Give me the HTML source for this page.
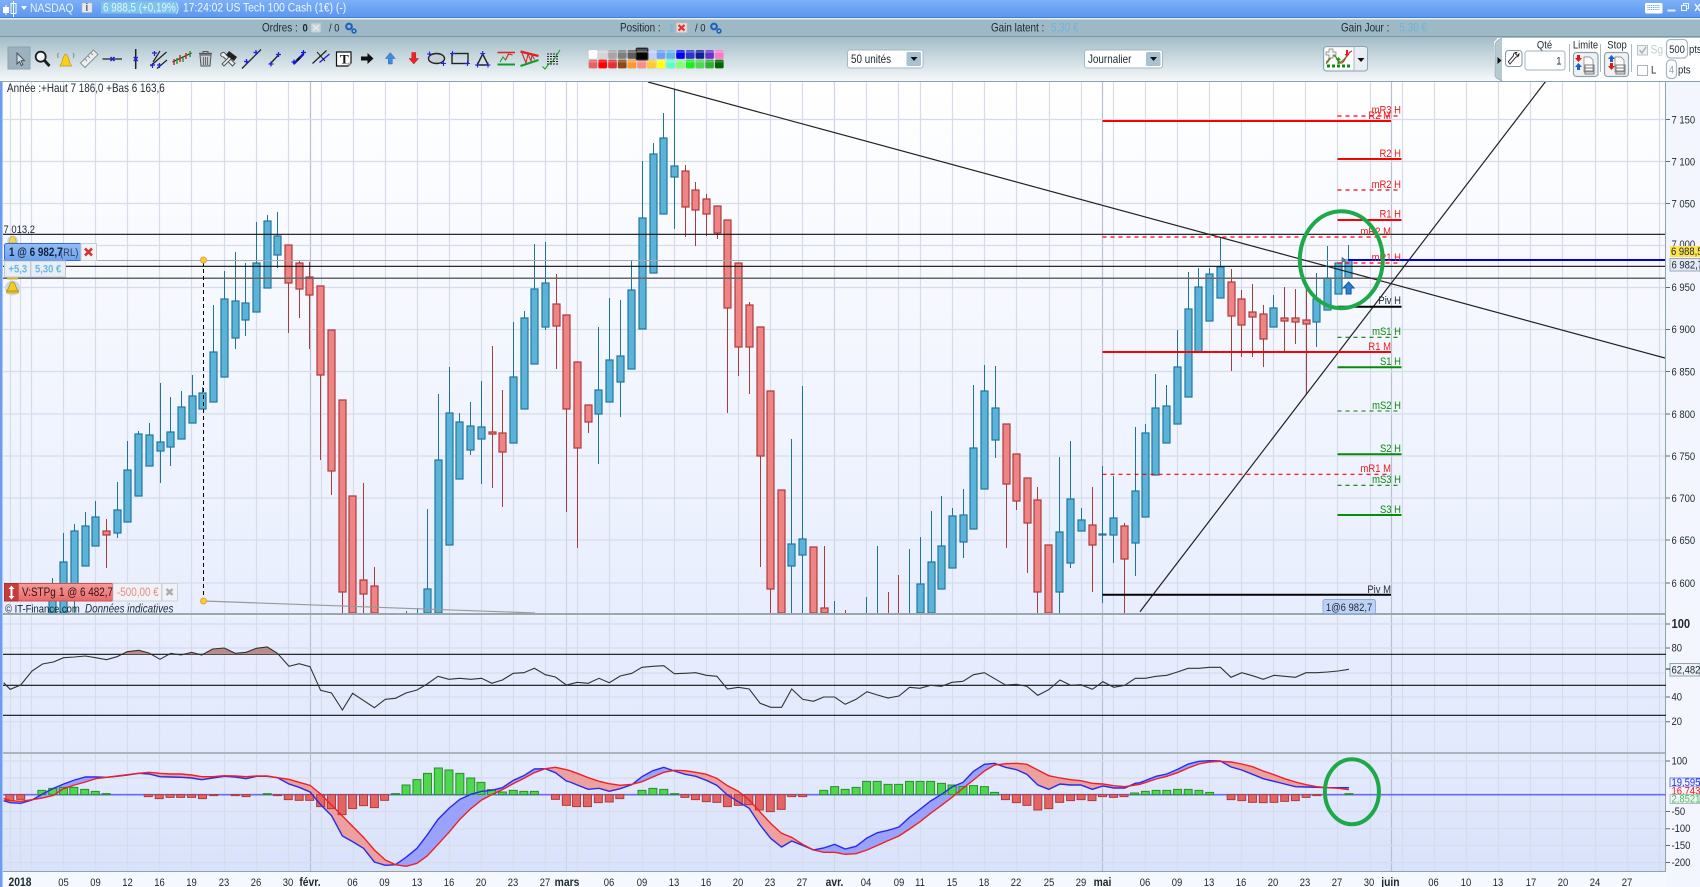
<!DOCTYPE html>
<html lang="fr"><head><meta charset="utf-8"><title>NASDAQ</title>
<style>
html,body{margin:0;padding:0;background:#fff;width:1700px;height:887px;overflow:hidden}
svg{display:block}
text{font-family:"Liberation Sans",sans-serif;font-size:11px;fill:#1d2830;transform-box:fill-box;transform-origin:0 0;transform:scaleX(.86)}
text.m{text-anchor:middle;transform-origin:50% 0}
text.e{text-anchor:end;transform-origin:100% 0}
.b{font-weight:bold}
.rd{fill:#f01818}.gn{fill:#0a8a0a}
.ns{vector-effect:non-scaling-stroke}
</style></head><body>
<svg width="1700" height="887" viewBox="0 0 1700 887" xmlns="http://www.w3.org/2000/svg">
<defs>
<linearGradient id="gt" x1="0" y1="0" x2="0" y2="1"><stop offset="0" stop-color="#7db0f7"/><stop offset="1" stop-color="#5a96ee"/></linearGradient>
<linearGradient id="gb" x1="0" y1="0" x2="0" y2="1"><stop offset="0" stop-color="#a3bcc8"/><stop offset=".55" stop-color="#d0dee3"/><stop offset="1" stop-color="#f6f8fa"/></linearGradient>
<linearGradient id="gm" x1="0" y1="0" x2="0" y2="1"><stop offset="0" stop-color="#ffffff"/><stop offset="1" stop-color="#e8eefe"/></linearGradient>
<linearGradient id="gr" x1="0" y1="0" x2="0" y2="1"><stop offset="0" stop-color="#e8eefe"/><stop offset="1" stop-color="#e2e9fd"/></linearGradient>
<linearGradient id="gc" x1="0" y1="0" x2="0" y2="1"><stop offset="0" stop-color="#e5ebfd"/><stop offset="1" stop-color="#d9e2fb"/></linearGradient>
<linearGradient id="gs" x1="0" y1="0" x2="0" y2="1"><stop offset="0" stop-color="#f59a9a"/><stop offset="1" stop-color="#e86a6a"/></linearGradient>
<linearGradient id="gp" x1="0" y1="0" x2="0" y2="1"><stop offset="0" stop-color="#94bdf5"/><stop offset="1" stop-color="#6ea2ec"/></linearGradient>
<linearGradient id="ga" gradientUnits="userSpaceOnUse" x1="0" y1="0" x2="1568" y2="0">
<stop offset=".064" stop-color="#eda0a0"/><stop offset=".064" stop-color="#9aa2fb"/><stop offset=".2455" stop-color="#9aa2fb"/><stop offset=".2455" stop-color="#eda0a0"/><stop offset=".694" stop-color="#eda0a0"/><stop offset=".694" stop-color="#9aa2fb"/><stop offset=".9566" stop-color="#9aa2fb"/><stop offset=".9566" stop-color="#eda0a0"/></linearGradient>
<linearGradient id="gd" gradientUnits="userSpaceOnUse" x1="0" y1="0" x2="1568" y2="0">
<stop offset=".108" stop-color="#eda0a0"/><stop offset=".108" stop-color="#9aa2fb"/><stop offset=".183" stop-color="#9aa2fb"/><stop offset=".183" stop-color="#eda0a0"/><stop offset=".427" stop-color="#eda0a0"/><stop offset=".427" stop-color="#9aa2fb"/><stop offset=".746" stop-color="#9aa2fb"/><stop offset=".746" stop-color="#eda0a0"/><stop offset=".979" stop-color="#eda0a0"/><stop offset=".979" stop-color="#9aa2fb"/></linearGradient>
<linearGradient id="ge" gradientUnits="userSpaceOnUse" x1="0" y1="0" x2="1568" y2="0">
<stop offset=".1435" stop-color="#9aa2fb"/><stop offset=".1435" stop-color="#eda0a0"/><stop offset=".335" stop-color="#eda0a0"/><stop offset=".335" stop-color="#9aa2fb"/></linearGradient>
<clipPath id="cm"><rect x="3" y="82" width="1663" height="531.5"/></clipPath>
<clipPath id="co"><rect x="3" y="617" width="1663" height="37.3"/></clipPath>
</defs>

<!-- page backgrounds -->
<rect width="1700" height="887" fill="#f3f6ff"/>
<rect x="3" y="82" width="1663" height="532" fill="url(#gm)"/>
<rect x="3" y="614" width="1663" height="3" fill="#eef2fa"/>
<rect x="3" y="617" width="1663" height="135" fill="url(#gr)"/>
<rect x="3" y="754" width="1663" height="117" fill="url(#gc)"/>
<rect x="3" y="872" width="1663" height="15" fill="#f6f8ff"/>

<!-- grid -->
<path fill="none" stroke="#d6dcea" stroke-width="1.2" d="M10.5 82V871M20.5 82V871M31.5 82V871M63.5 82V871M95.5 82V871M127.5 82V871M159.5 82V871M191.5 82V871M224.5 82V871M256.5 82V871M288.5 82V871M321.5 82V871M353.5 82V871M385.5 82V871M417.5 82V871M449.5 82V871M481.5 82V871M513.5 82V871M545.5 82V871M577.5 82V871M609.5 82V871M642.5 82V871M674.5 82V871M706.5 82V871M738.5 82V871M770.5 82V871M802.5 82V871M866.5 82V871M898.5 82V871M920.5 82V871M952.5 82V871M984.5 82V871M1016.5 82V871M1049.5 82V871M1081.5 82V871M1113.5 82V871M1145.5 82V871M1177.5 82V871M1209.5 82V871M1241.5 82V871M1273.5 82V871M1305.5 82V871M1337.5 82V871M1370.5 82V871M1402.5 82V871M1434.5 82V871M1466.5 82V871M1498.5 82V871M1530.5 82V871M1562.5 82V871M1595.5 82V871M1627.5 82V871M1659.5 82V871"/>
<path fill="none" stroke="#cdd4e4" stroke-width="1.2" d="M566.5 82V871M834.5 82V871"/>
<path fill="none" stroke="#b8c0cf" stroke-width="1.2" d="M310.5 82V871M1102.5 82V871M1391.5 82V871"/>
<path fill="none" stroke="#d6dcea" stroke-width="1.2" d="M3 119.5H1666M3 161.5H1666M3 203.5H1666M3 245.5H1666M3 287.5H1666M3 329.5H1666M3 371.5H1666M3 414H1666M3 456H1666M3 498H1666M3 540H1666M3 583H1666M3 624H1666M3 648H1666M3 673H1666M3 697H1666M3 721.7H1666M3 761H1666M3 778H1666M3 811.5H1666M3 828.7H1666M3 845.5H1666M3 862.5H1666"/>

<!-- candles -->
<g clip-path="url(#cm)" fill="none">
<path stroke="#1f7394" d="M52.5 578V613M63.5 533V613M74.5 524V613M85.5 512V566M95.5 501V546M117.5 482V538M127.5 441V522M138.5 431V496M149.5 423V466M160.5 383V483M170.5 397V466M181.5 391V439M192.5 375V423M202.5 387V409M213.5 305V402M224.5 271V377M235.5 252V349M245.5 263V336M256.5 222V312M267.5 215V288M277.5 212V268M406.5 611V613M417.5 608V613M427.5 509V613M438.5 394V613M449.5 367V545M459.5 413V479M470.5 402V455M481.5 381V484M513.5 322V443M524.5 311V409M534.5 244V364M545.5 242V330M598.5 327V464M609.5 298V402M620.5 300V417M631.5 261V369M642.5 161V329M653.5 143V273M663.5 113V214M674.5 89V229M791.5 439V613M802.5 386V613M834.5 601V613M866.5 597V613M877.5 546V613M909.5 549V613M920.5 537V613M931.5 511V613M941.5 496V589M952.5 508V568M963.5 489V558M973.5 385V529M984.5 365V489M995.5 366V458M1059.5 457V613M1070.5 441V568M1081.5 508V531M1102.5 466V603M1113.5 476V563M1135.5 427V576M1145.5 424V517M1155.5 374V475M1166.5 385V443M1177.5 330V424M1188.5 272V397M1198.5 268V352M1209.5 268V321M1220.5 237V298M1273.5 295V327M1316.5 273V347M1327.5 246V310M1338.5 263V294M1348.5 245V278"/>
<path stroke="#a83c3c" d="M106.5 519V568M288.5 245V333M299.5 260V318M309.5 262V349M320.5 286V460M331.5 330V495M342.5 400V613M352.5 496V613M363.5 483V613M374.5 567V613M492.5 346V488M502.5 390V507M556.5 274V369M566.5 315V512M577.5 362V548M588.5 405V433M685.5 165V237M695.5 182V246M706.5 194V236M717.5 206V239M727.5 220V413M738.5 263V376M749.5 302V394M760.5 327V567M770.5 391V613M781.5 490V613M813.5 547V613M824.5 546V613M845.5 610V613M888.5 592V613M898.5 575V613M1006.5 424V548M1016.5 454V510M1027.5 478V573M1037.5 487V613M1048.5 545V613M1092.5 487V592M1124.5 523V613M1231.5 269V371M1241.5 290V357M1252.5 284V357M1263.5 305V367M1284.5 287V352M1295.5 289V344M1306.5 288V395"/>
<path fill="#5cb3da" stroke="#22789f" stroke-width="1.2" d="M49 595h7V613h-7zM60 562h7V613h-7zM71 531h7V590h-7zM82 526h7V566h-7zM92 517h7V546h-7zM114 510h7V533h-7zM124 470h7V522h-7zM135 434h7V496h-7zM146 435h7V466h-7zM157 442h7V451h-7zM167 432h7V447h-7zM178 407h7V439h-7zM189 396h7V423h-7zM199 393h7V409h-7zM210 352h7V402h-7zM221 299h7V377h-7zM232 301h7V338h-7zM242 303h7V320h-7zM253 263h7V312h-7zM264 221h7V288h-7zM274 236h7V255h-7zM424 589h7V613h-7zM435 460h7V613h-7zM446 413h7V545h-7zM456 422h7V479h-7zM467 426h7V450h-7zM478 427h7V439h-7zM510 377h7V443h-7zM521 318h7V409h-7zM531 289h7V364h-7zM542 283h7V327h-7zM595 390h7V414h-7zM606 360h7V402h-7zM617 356h7V382h-7zM628 290h7V369h-7zM639 218h7V329h-7zM650 154h7V273h-7zM660 138h7V214h-7zM671 166h7V177h-7zM788 544h7V566h-7zM799 539h7V555h-7zM917 584h7V613h-7zM928 562h7V613h-7zM938 546h7V589h-7zM949 516h7V568h-7zM960 515h7V542h-7zM970 448h7V529h-7zM981 391h7V489h-7zM992 408h7V440h-7zM1056 532h7V592h-7zM1067 499h7V563h-7zM1078 520h7V531h-7zM1099 534h7V535h-7zM1110 518h7V535h-7zM1132 491h7V543h-7zM1142 433h7V517h-7zM1152 408h7V475h-7zM1163 406h7V443h-7zM1174 367h7V424h-7zM1185 309h7V397h-7zM1195 287h7V352h-7zM1206 274h7V321h-7zM1217 267h7V298h-7zM1270 308h7V327h-7zM1313 299h7V322h-7zM1324 278h7V310h-7zM1335 263h7V294h-7zM1345 260h7V278h-7z"/>
<path fill="#ee8484" stroke="#b03c3c" stroke-width="1.2" d="M103 531h7V535h-7zM285 245h7V283h-7zM296 263h7V289h-7zM306 277h7V295h-7zM317 286h7V375h-7zM328 330h7V471h-7zM339 400h7V592h-7zM349 496h7V613h-7zM360 580h7V594h-7zM371 586h7V613h-7zM489 432h7V434h-7zM499 433h7V452h-7zM553 304h7V326h-7zM563 315h7V409h-7zM574 362h7V448h-7zM585 405h7V422h-7zM682 171h7V207h-7zM692 190h7V210h-7zM703 199h7V214h-7zM714 206h7V233h-7zM724 220h7V308h-7zM735 263h7V347h-7zM746 305h7V347h-7zM757 327h7V456h-7zM767 391h7V589h-7zM778 490h7V613h-7zM810 547h7V613h-7zM821 608h7V613h-7zM1003 424h7V484h-7zM1013 454h7V501h-7zM1024 478h7V523h-7zM1034 500h7V592h-7zM1045 545h7V613h-7zM1089 525h7V545h-7zM1121 526h7V559h-7zM1228 282h7V316h-7zM1238 299h7V325h-7zM1249 312h7V317h-7zM1260 314h7V339h-7zM1281 318h7V321h-7zM1292 318h7V322h-7zM1303 320h7V324h-7z"/>

<!-- horizontal levels -->
<path stroke="#111" stroke-width="1.2" d="M3 234.3H1666M3 266.3H1666"/>
<path stroke="#666" stroke-width="1.5" d="M3 278.3H1666"/>
<path stroke="#a4a8ae" d="M3 260.5H1666"/>
<path stroke="#222" stroke-width="1.2" d="M648 82L1665 358M1140 611.7L1545.4 81.7"/>
<path stroke="#999" stroke-width="1.2" d="M203.5 601L535 613"/>
<path stroke="#f00" stroke-width="2" d="M1102.5 121H1391M1102.5 352H1391M1337.5 159H1401.5M1337.5 220H1401.5"/>
<path stroke="#f00" stroke-width="1.2" stroke-dasharray="4 4" d="M1102.5 237H1391M1102.5 474.3H1391M1337.5 116H1398M1337.5 190H1398M1337.5 263H1398"/>
<path stroke="#0a8a0a" stroke-width="2" d="M1337.5 367.3H1401.5M1337.5 454.3H1401.5M1337.5 515H1401.5"/>
<path stroke="#0a7a0a" stroke-width="1.1" stroke-dasharray="4 4" d="M1337.5 337.3H1398M1337.5 411H1398M1337.5 485.3H1398"/>
<path stroke="#000" stroke-width="2" d="M1102.5 594.7H1391M1337.5 306.7H1401.5"/>
<path stroke="#0000e0" stroke-width="2" d="M1348 260H1666"/>
<path stroke="#000" stroke-dasharray="4 3" d="M203.5 262V600"/>
<g>
<text class="e rd" x="1391" y="119">R2 M</text>
<text class="e rd" x="1401" y="113.500">mR3 H</text>
<text class="e rd" x="1401" y="157">R2 H</text>
<text class="e rd" x="1401" y="188">mR2 H</text>
<text class="e rd" x="1401" y="217.500">R1 H</text>
<text class="e rd" x="1391" y="235">mR2 M</text>
<text class="e rd" x="1401" y="261">mR1 H</text>
<text class="e" x="1401" y="304">Piv H</text>
<text class="e gn" x="1401" y="335">mS1 H</text>
<text class="e rd" x="1391" y="350">R1 M</text>
<text class="e gn" x="1401" y="365">S1 H</text>
<text class="e gn" x="1401" y="409">mS2 H</text>
<text class="e gn" x="1401" y="452">S2 H</text>
<text class="e rd" x="1391" y="472">mR1 M</text>
<text class="e gn" x="1401" y="483">mS3 H</text>
<text class="e gn" x="1401" y="513">S3 H</text>
<text class="e" x="1391" y="593">Piv M</text>
</g>
<path d="M1348.600 282l5.500 6h-3v6h-5v-6h-3z" fill="#2a80d0" stroke="#155a9a"/>
<path d="M1342 257.500v5l3.500-2.500z" fill="#5a7fb0" stroke="#39557a" stroke-width=".6"/>
<ellipse cx="1341.300" cy="259.700" rx="41.500" ry="48.500" fill="none" stroke="#1fa84a" stroke-width="4"/>
</g>

<circle cx="203.500" cy="260" r="3" fill="#f6c945" stroke="#e8a820"/>
<circle cx="203.500" cy="601" r="3" fill="#f6c945" stroke="#e8a820"/>

<!-- panel separators -->
<rect x="3" y="613" width="1663" height="2" fill="#98a9b0"/>
<rect x="3" y="752" width="1663" height="2" fill="#a9b6bc"/>
<rect x="3" y="871" width="1663" height="1" fill="#8fa3ad"/>
<rect x="1665" y="82" width="1" height="790" fill="#8fa3ad"/>

<!-- RSI -->
<path stroke="#111" stroke-width="1.2" d="M3 654.300H1666M3 685.300H1666M3 715.300H1666"/>
<polygon clip-path="url(#co)" fill="#b98c8c" points="117,660 127.200,651.700 138.900,650.300 149,653 160,659.300 170.800,653.300 181,655 191.600,652.300 201.700,655 212.700,649 224.300,648 235.200,653.300 246.100,652.300 256.300,648.300 267.200,647 277.400,653.300 289,666"/>
<polyline fill="none" stroke="#333" stroke-width="1.1" points="3.600,682.700 10.200,689.300 20.700,685 32,671 42.500,664 53.400,662 63.600,657.700 74.500,657 85.400,656 95.600,657.700 106.500,659.700 117,656.700 127.200,651.700 138.900,650.300 149,653 160,659.300 170.800,653.300 181,655 191.600,652.300 201.700,655 212.700,649 224.300,648 235.200,653.300 246.100,652.300 256.300,648.300 267.200,647 277.400,653.300 289,666.300 299.200,663.700 310,666.700 320.600,690.300 331.500,693 342.400,710 352.600,693.300 374.400,707.700 385.300,699.300 395.500,698.300 406,693 417,690 427.100,684 438,676.300 448.900,679.300 459.800,678.300 470.700,679.300 481.600,678.300 491.800,683.300 502.400,680 513.300,673.300 523.800,672.700 534.400,668.300 545.300,674.700 555.400,677 566.300,685 577.300,682.300 588.200,683.300 599,678.300 609.300,682.700 620.200,676 631.800,673.300 642,667.300 652.900,666.300 663.800,665.700 674.300,673.700 685.200,673.300 695.800,672.700 706.300,675.300 716.900,676.300 727.400,689 738.300,687.300 749.200,689 760.100,703.300 770.700,707.300 781.600,707.300 791.700,689 802.600,699.300 813.500,701.300 823.700,697 834.600,697 845.200,704.300 856.100,699.300 867,691.700 877.500,695 888.100,698 899,696 909.500,687.300 920,688.300 930.600,685.300 941.500,686.300 952,682.300 963,681.300 973.500,674.700 984.400,672.700 994.600,678.700 1005.500,685 1016.400,684.300 1026.900,686.300 1037.800,695.300 1048.700,689.700 1060,680 1070.500,685.300 1080.700,684.700 1092.400,689.300 1102.900,681.700 1113.800,687.300 1124.700,685.300 1135.300,678.300 1145.400,678.300 1156,676.300 1166.800,675.300 1177.500,672 1188,668.300 1199,668.300 1209.600,667.300 1220.400,667.300 1231,677.300 1241.800,672.700 1252.500,675.700 1263.200,679.300 1274,675.300 1284.600,676.300 1295.400,677.300 1306,672.700 1316.800,672.700 1327.500,672 1338,671 1349,669.300"/>

<!-- MACD -->
<path stroke="#6a6af0" stroke-width="1.6" d="M3 794.700H1666"/>
<g transform="translate(0,610) scale(.36351,.33333)">
<polygon fill="url(#ga)" points="10,572 28,578 57,580 88,570 117,552 147,535 175,522 205,510 235,501 263,501 293,502 322,499 350,495 382,490 410,492 440,500 470,501 498,502 527,504 555,509 585,504 617,499 647,501 677,506 705,499 735,499 763,503 795,522 823,532 853,546 882,584 912,617 942,678 970,695 1000,715 1030,756 1060,766 1088,764 1117,742 1147,715 1175,675 1205,628 1235,595 1265,568 1295,553 1325,544 1353,541 1382,533 1412,511 1441,497 1470,477 1500,476 1528,488 1558,513 1568,516 1568,482 1558,479 1528,472 1500,476 1470,488 1441,505 1412,521 1382,539 1353,554 1325,570 1295,596 1265,628 1235,667 1205,703 1175,738 1147,760 1117,769 1088,764 1060,750 1030,720 1000,682 970,649 942,618 912,585 882,552 853,526 823,517 795,508 763,503 735,498 705,498 677,500 647,498 617,497 585,500 555,500 527,495 498,492 470,492 440,490 410,487 382,490 350,494 322,498 293,502 263,506 235,516 205,525 175,536 147,556 117,564 88,569 57,574 28,572 10,565"/>
<path class="ns" fill="#4fd84f" stroke="#2a8f2a" d="M104 554V541h22V554zM134 554V535h22V554zM164 554V532h22V554zM192 554V532h22V554zM222 554V538h22V554zM251 554V544h22V554zM281 554V551h22V554zM724 554V551h22V554zM1077 554V551h22V554zM1106 554V525h22V554zM1136 554V509h22V554zM1165 554V490h22V554zM1195 554V474h22V554zM1224 554V480h22V554zM1254 554V490h22V554zM1284 554V504h22V554zM1312 554V517h22V554zM1341 554V539h22V554zM1371 554V546h22V554zM1401 554V541h22V554zM1430 554V544h22V554zM1459 554V544h22V554z"/>
<path class="ns" fill="#e26464" stroke="#b03c3c" d="M16 554V572h22V554zM46 554V568h22V554zM397 554V560h22V554zM427 554V566h22V554zM457 554V562h22V554zM486 554V562h22V554zM516 554V562h22V554zM546 554V566h22V554zM577 554V557h22V554zM636 554V557h22V554zM666 554V560h22V554zM752 554V557h22V554zM782 554V569h22V554zM812 554V571h22V554zM841 554V571h22V554zM871 554V590h22V554zM901 554V596h22V554zM930 554V614h22V554zM959 554V596h22V554zM989 554V587h22V554zM1019 554V593h22V554zM1047 554V571h22V554zM1517 554V568h22V554zM1547 554V586h22V554z"/>
<polyline class="ns" fill="none" stroke="#2a2aee" stroke-width="1.4" points="10,572 28,578 57,580 88,570 117,552 147,535 175,522 205,510 235,501 263,501 293,502 322,499 350,495 382,490 410,492 440,500 470,501 498,502 527,504 555,509 585,504 617,499 647,501 677,506 705,499 735,499 763,503 795,522 823,532 853,546 882,584 912,617 942,678 970,695 1000,715 1030,756 1060,766 1088,764 1117,742 1147,715 1175,675 1205,628 1235,595 1265,568 1295,553 1325,544 1353,541 1382,533 1412,511 1441,497 1470,477 1500,476 1528,488 1558,513 1568,516"/>
<polyline class="ns" fill="none" stroke="#ee2222" stroke-width="1.4" points="10,565 28,572 57,574 88,569 117,564 147,556 175,536 205,525 235,516 263,506 293,502 322,498 350,494 382,490 410,487 440,490 470,492 498,492 527,495 555,500 585,500 617,497 647,498 677,500 705,498 735,498 763,503 795,508 823,517 853,526 882,552 912,585 942,618 970,649 1000,682 1030,720 1060,750 1088,764 1117,769 1147,760 1175,738 1205,703 1235,667 1265,628 1295,596 1325,570 1353,554 1382,539 1412,521 1441,505 1470,488 1500,476 1528,472 1558,479 1568,482"/>
</g>
<g transform="translate(570,610) scale(.36351,.33333)">
<polygon fill="url(#gd)" points="0,516 20,525 50,538 80,535 108,544 138,536 170,524 198,500 228,482 258,472 287,483 317,493 346,499 375,511 404,526 433,555 463,575 493,595 523,645 552,685 582,711 610,693 640,706 670,720 698,714 728,703 757,717 787,709 817,684 846,668 875,661 905,651 934,622 963,598 992,573 1022,553 1051,531 1081,517 1110,484 1140,463 1168,460 1198,472 1228,479 1257,493 1287,525 1317,538 1348,522 1377,525 1405,525 1437,538 1466,528 1496,534 1526,534 1555,520 1568,518 1568,523 1555,525 1526,530 1496,527 1466,522 1437,520 1405,512 1377,509 1348,504 1317,497 1287,480 1257,463 1228,460 1198,461 1168,465 1140,483 1110,510 1081,535 1051,562 1022,586 992,610 963,635 934,657 905,678 875,692 846,706 817,720 787,731 757,733 728,727 698,727 670,720 640,703 610,682 582,670 552,640 523,606 493,570 463,544 433,527 404,505 375,493 346,487 317,482 287,481 258,487 228,501 198,515 170,523 138,526 108,521 80,514 50,503 20,490 0,482"/>
<path class="ns" fill="#4fd84f" stroke="#2a8f2a" d="M187 554V541h22V554zM217 554V535h22V554zM247 554V538h22V554zM277 554V551h22V554zM687 554V541h22V554zM717 554V530h22V554zM746 554V538h22V554zM776 554V532h22V554zM805 554V514h22V554zM834 554V514h22V554zM864 554V523h22V554zM893 554V523h22V554zM923 554V514h22V554zM952 554V514h22V554zM981 554V514h22V554zM1011 554V520h22V554zM1040 554V525h22V554zM1070 554V530h22V554zM1099 554V527h22V554zM1129 554V530h22V554zM1157 554V547h22V554zM1542 554V549h22V554z"/>
<path class="ns" fill="#e26464" stroke="#b03c3c" d="M7 554V590h22V554zM37 554V590h22V554zM67 554V578h22V554zM97 554V576h22V554zM126 554V566h22V554zM305 554V562h22V554zM334 554V569h22V554zM364 554V575h22V554zM393 554V577h22V554zM422 554V590h22V554zM452 554V586h22V554zM481 554V584h22V554zM510 554V600h22V554zM540 554V605h22V554zM570 554V598h22V554zM599 554V560h22V554zM629 554V560h22V554zM1187 554V569h22V554zM1217 554V578h22V554zM1246 554V586h22V554zM1276 554V600h22V554zM1306 554V596h22V554zM1336 554V577h22V554zM1366 554V572h22V554zM1395 554V569h22V554zM1425 554V572h22V554zM1454 554V560h22V554zM1484 554V562h22V554zM1513 554V560h22V554z"/>
<polyline class="ns" fill="none" stroke="#2a2aee" stroke-width="1.4" points="0,516 20,525 50,538 80,535 108,544 138,536 170,524 198,500 228,482 258,472 287,483 317,493 346,499 375,511 404,526 433,555 463,575 493,595 523,645 552,685 582,711 610,693 640,706 670,720 698,714 728,703 757,717 787,709 817,684 846,668 875,661 905,651 934,622 963,598 992,573 1022,553 1051,531 1081,517 1110,484 1140,463 1168,460 1198,472 1228,479 1257,493 1287,525 1317,538 1348,522 1377,525 1405,525 1437,538 1466,528 1496,534 1526,534 1555,520 1568,518"/>
<polyline class="ns" fill="none" stroke="#ee2222" stroke-width="1.4" points="0,482 20,490 50,503 80,514 108,521 138,526 170,523 198,515 228,501 258,487 287,481 317,482 346,487 375,493 404,505 433,527 463,544 493,570 523,606 552,640 582,670 610,682 640,703 670,720 698,727 728,727 757,733 787,731 817,720 846,706 875,692 905,678 934,657 963,635 992,610 1022,586 1051,562 1081,535 1110,510 1140,483 1168,465 1198,461 1228,460 1257,463 1287,480 1317,497 1348,504 1377,509 1405,512 1437,520 1466,522 1496,527 1526,530 1555,525 1568,523"/>
</g>
<g transform="translate(1140,610) scale(.35714,.33333)">
<polygon fill="url(#ge)" points="0,518 45,499 75,492 105,478 135,462 165,454 195,452 225,453 255,471 285,480 315,493 345,506 375,514 405,522 435,530 465,531 495,532 525,533 555,533 585,533 585,539 555,535 525,533 495,530 465,524 435,516 405,506 375,494 345,483 315,470 285,462 255,456 225,454 195,456 165,462 135,474 105,488 75,499 45,507 0,523"/>
<path class="ns" fill="#4fd84f" stroke="#2a8f2a" d="M4 554V544h22V554zM34 554V541h22V554zM64 554V541h22V554zM94 554V538h22V554zM124 554V538h22V554zM154 554V541h22V554zM184 554V547h22V554zM574 554V551h22V554z"/>
<path class="ns" fill="#e26464" stroke="#b03c3c" d="M244 554V569h22V554zM274 554V572h22V554zM304 554V577h22V554zM334 554V578h22V554zM364 554V577h22V554zM394 554V574h22V554zM424 554V572h22V554zM454 554V562h22V554zM484 554V557h22V554z"/>
<polyline class="ns" fill="none" stroke="#2a2aee" stroke-width="1.4" points="0,518 45,499 75,492 105,478 135,462 165,454 195,452 225,453 255,471 285,480 315,493 345,506 375,514 405,522 435,530 465,531 495,532 525,533 555,533 585,533"/>
<polyline class="ns" fill="none" stroke="#ee2222" stroke-width="1.4" points="0,523 45,507 75,499 105,488 135,474 165,462 195,456 225,454 255,456 285,462 315,470 345,483 375,494 405,506 435,516 465,524 495,530 525,533 555,535 585,539"/>
</g>
<ellipse cx="1351.900" cy="791.700" rx="27" ry="32.500" fill="none" stroke="#1fa84a" stroke-width="4"/>

<!-- date axis -->
<g>
<text class="m b" x="20" y="886" style="font-size:12px">2018</text><text class="m" x="63.500" y="886">05</text><text class="m" x="95.500" y="886">09</text><text class="m" x="127.500" y="886">12</text><text class="m" x="159.500" y="886">16</text><text class="m" x="191.500" y="886">19</text><text class="m" x="224" y="886">23</text><text class="m" x="256" y="886">26</text><text class="m" x="288" y="886">30</text><text class="m b" x="310" y="886" style="font-size:12px">févr.</text><text class="m" x="352.500" y="886">06</text><text class="m" x="384.500" y="886">09</text><text class="m" x="417" y="886">13</text><text class="m" x="449" y="886">16</text><text class="m" x="481" y="886">20</text><text class="m" x="513" y="886">23</text><text class="m" x="545" y="886">27</text><text class="m b" x="567" y="886" style="font-size:12px">mars</text><text class="m" x="609" y="886">06</text><text class="m" x="642" y="886">09</text><text class="m" x="674" y="886">13</text><text class="m" x="706" y="886">16</text><text class="m" x="738" y="886">20</text><text class="m" x="770" y="886">23</text><text class="m" x="802" y="886">27</text><text class="m b" x="834.500" y="886" style="font-size:12px">avr.</text><text class="m" x="866" y="886">04</text><text class="m" x="899" y="886">09</text><text class="m" x="920" y="886">11</text><text class="m" x="952" y="886">15</text><text class="m" x="984" y="886">18</text><text class="m" x="1016" y="886">22</text><text class="m" x="1049" y="886">25</text><text class="m" x="1081" y="886">29</text><text class="m b" x="1102.500" y="886" style="font-size:12px">mai</text><text class="m" x="1145" y="886">06</text><text class="m" x="1177" y="886">09</text><text class="m" x="1209" y="886">13</text><text class="m" x="1241" y="886">16</text><text class="m" x="1273" y="886">20</text><text class="m" x="1305" y="886">23</text><text class="m" x="1337" y="886">27</text><text class="m" x="1369" y="886">30</text><text class="m b" x="1390.500" y="886" style="font-size:12px">juin</text><text class="m" x="1433.500" y="886">06</text><text class="m" x="1466" y="886">10</text><text class="m" x="1498" y="886">13</text><text class="m" x="1531" y="886">17</text><text class="m" x="1563" y="886">20</text><text class="m" x="1595" y="886">24</text><text class="m" x="1627" y="886">27</text>
</g>

<!-- right axis -->
<path stroke="#5a6a72" d="M1666 119.500h4M1666 161.500h4M1666 203.500h4M1666 287.500h4M1666 329.500h4M1666 371.500h4M1666 414h4M1666 456h4M1666 498h4M1666 540h4M1666 583h4M1666 624h4M1666 648h4M1666 669h4M1666 697h4M1666 721.700h4M1666 761h4M1666 811.500h4M1666 828.700h4M1666 845.500h4M1666 862.500h4"/>
<g>
<text x="1671.500" y="123.500">7 150</text><text x="1671.500" y="165.500">7 100</text><text x="1671.500" y="207.500">7 050</text><text x="1671.500" y="248">7 000</text><text x="1671.500" y="291">6 950</text><text x="1671.500" y="333">6 900</text><text x="1671.500" y="375.500">6 850</text><text x="1671.500" y="418">6 800</text><text x="1671.500" y="460">6 750</text><text x="1671.500" y="502">6 700</text><text x="1671.500" y="544">6 650</text><text x="1671.500" y="587">6 600</text>
<text class="b" x="1671.500" y="628" style="font-size:13px">100</text><text x="1671.500" y="651.500">80</text><text x="1671.500" y="700.500">40</text><text x="1671.500" y="725">20</text>
<text x="1671.500" y="764.500">100</text><text x="1671.500" y="815">-50</text><text x="1671.500" y="832">-100</text><text x="1671.500" y="849">-150</text><text x="1671.500" y="866">-200</text>
</g>
<rect x="1670" y="246" width="30" height="11" fill="#ffe24d"/>
<text x="1671" y="255">6 988,5</text>
<rect x="1670" y="258.500" width="30" height="12.500" fill="#e3eaf6" stroke="#9aaab5"/>
<text x="1671.500" y="268.500">6 982,7</text>
<rect x="1670" y="663.500" width="30" height="12.500" fill="#eef2fb" stroke="#8fa3ad"/>
<text x="1671.500" y="673.500">62,482</text>
<path d="M1666 669h4" stroke="#222"/>
<rect x="1670" y="778" width="30" height="9" fill="#eef2fb" stroke="#4a6ae0" stroke-width=".8"/>
<text x="1671.500" y="786" style="fill:#2a2aee">19,595</text>
<rect x="1670" y="787" width="30" height="7" fill="#f6f2f6"/>
<text x="1671.500" y="794.500" class="rd">16,743</text>
<rect x="1670" y="794.500" width="30" height="9" fill="#eef2fb" stroke="#a0b0b8" stroke-width=".8"/>
<text x="1671.500" y="802.500" style="fill:#4ec24e">2,8521</text>

<!-- chart overlays -->
<text x="7" y="92" style="font-size:11.500px">Année :+Haut 7 186,0 +Bas 6 163,6</text>
<text x="3.500" y="233">7 013,2</text>
<circle cx="12.700" cy="241" r="5.500" fill="#ccd8e8"/>
<path d="M12.700 236.500c-3 0-2.500 4-4 6h8c-1.500-2-1-6-4-6z" fill="#f2d84a" stroke="#c8a820" stroke-width=".6"/>
<rect x="4.500" y="243.500" width="76.500" height="17" rx="2" fill="url(#gp)" stroke="#2f6fd8"/>
<text class="b" x="9" y="256" style="fill:#12233f;font-size:11.500px">1 @ 6 982,7</text><text x="60" y="256" style="fill:#2c3e58">(RL)</text>
<rect x="81" y="243.500" width="15.500" height="17" fill="#f2f3f6" stroke="#c6ced8"/>
<path d="M85 248.500l7 7M92 248.500l-7 7" stroke="#d63030" stroke-width="2.600"/>
<rect x="4.500" y="261" width="26" height="16" fill="#e8eef6" stroke="#c3ccd6"/>
<rect x="31" y="261" width="34.500" height="16" fill="#e8eef6" stroke="#c3ccd6"/>
<text x="8.500" y="272.500" class="b" style="fill:#6cb8dc">+5,3</text><text x="35" y="272.500" class="b" style="fill:#6cb8dc">5,30 €</text>
<circle cx="12.500" cy="288" r="7.500" fill="#ccd8e8"/>
<path d="M12.500 282c-3.500 0-2.500 6-6 9h12c-3.500-3-2.500-9-6-9z" fill="#f5cb1c" stroke="#a08820" stroke-width=".7"/><rect x="7" y="277.500" width="11" height="2" fill="#d8b030"/><rect x="6" y="291.500" width="13" height="2" fill="#e0b420"/>

<rect x="4.500" y="583.500" width="14" height="17.500" fill="#c43c3c" stroke="#a83030"/>
<path d="M11.500 585.500l3 3.500h-2v7h2l-3 3.500-3-3.500h2v-7h-2z" fill="#fff"/>
<rect x="18.500" y="583.500" width="94" height="17.500" fill="url(#gs)" stroke="#cc5050"/>
<text x="22" y="596" style="fill:#3a0e0e;font-size:11.500px">V:STPg</text><text x="59" y="596" style="fill:#3a0e0e;font-size:11.500px">1 @ 6 482,7</text>
<rect x="113" y="583.500" width="48.500" height="17.500" fill="#f1f2f5" stroke="#ccd2d8"/>
<text x="117" y="596" style="fill:#e88a8a;font-size:11.500px">-500,00 €</text>
<rect x="162" y="583.500" width="15.500" height="17.500" fill="#f1f2f5" stroke="#ccd2d8"/>
<path d="M166.500 589l6 6M172.500 589l-6 6" stroke="#a8aeb4" stroke-width="2.600"/>
<text x="5" y="612.500" style="fill:#14202a">© IT-Finance.com</text>
<text x="85" y="612.500" style="font-style:italic;font-size:11.500px">Données indicatives</text>
<rect x="1323" y="599.500" width="52.500" height="14" rx="2" fill="#bed2f6" stroke="#8eaee0"/>
<text class="m" x="1349" y="611">1@6 982,7</text>

<!-- left strip -->
<rect x="0" y="18" width="2.500" height="869" fill="#6a9cf0"/>

<!-- top bar -->
<rect width="1700" height="18" fill="url(#gt)"/>
<rect y="17" width="1700" height="1" fill="#3f7fd8"/>
<rect y="18" width="1700" height="1.500" fill="#e6eff4"/>
<rect x="3" y="7" width="6" height="6" fill="#fff"/><path d="M6 5v10" stroke="#fff"/>
<rect x="11" y="3.500" width="5" height="10" fill="none" stroke="#fff"/><path d="M13.500 1v16" stroke="#fff"/>
<path d="M21 6h6l-3 4z" fill="#fff"/>
<text x="30" y="12" style="fill:#eaf3ff;font-size:12px">NASDAQ</text>
<rect x="82" y="3" width="10" height="9.500" fill="#e8e8ea" stroke="#b0b8c4" stroke-width=".5"/><text x="85.500" y="11" style="fill:#556;font-weight:bold">i</text>
<rect x="101" y="1.500" width="76" height="12" fill="#7cc4ea"/>
<text x="103" y="11.500" style="fill:#e4f4ff;font-size:11.500px">6 988,5 (+0,19%)</text>
<text x="183" y="11.500" style="fill:#f2f8ff;font-size:12px">17:24:02 US Tech 100 Cash (1€) (-)</text>
<rect x="1645" y="3" width="17.500" height="10.500" rx="1.500" fill="#fff"/>
<path d="M1647.500 5.500h12M1647.500 7.500h12M1647.500 9.500h12" stroke="#5a96ee" stroke-dasharray="1 .8"/>
<rect x="1667.500" y="9.500" width="8" height="2" fill="#e8f0ff"/>
<path d="M1681.500 5.500h5v5h-5zM1683.500 5.500v-2h5v5h-2" fill="none" stroke="#f0f6ff"/>
<path d="M1695 4l5 7M1700 4l-5 7" stroke="#f0f6ff" stroke-width="1.500"/>

<!-- ordres bar -->
<rect y="19.500" width="1700" height="17" fill="#9eb9c6"/>
<rect y="36" width="1700" height="1" fill="#7d99a5"/>
<text x="262" y="31.500" style="font-size:11.500px">Ordres :</text><text class="b" x="302.500" y="31.500">0</text>
<rect x="311" y="23" width="10" height="9.500" fill="#c9d2d8" stroke="#b0bcc4" stroke-width=".6"/>
<path d="M313 25l6 5.500M319 25l-6 5.500" stroke="#e4e8ea" stroke-width="1.500"/>
<text x="329" y="31.500">/ 0</text>
<g fill="none" stroke="#1e62c0"><circle cx="349" cy="26.500" r="2.800" stroke-width="2.200"/><circle cx="354" cy="31" r="1.900" stroke-width="1.600"/></g>
<text x="620" y="31.500" style="font-size:11.500px">Position :</text>
<text x="669" y="31.500" style="fill:#78b4d8" class="b">1</text>
<rect x="676.500" y="23" width="10.500" height="9.500" fill="#f0dada" stroke="#d8c0c0" stroke-width=".6"/>
<path d="M678.500 25l6 5.500M684.500 25l-6 5.500" stroke="#e03030" stroke-width="2.200"/>
<text x="695" y="31.500">/ 0</text>
<g fill="none" stroke="#1e62c0"><circle cx="714" cy="26.500" r="2.800" stroke-width="2.200"/><circle cx="719" cy="31" r="1.900" stroke-width="1.600"/></g>
<text x="991" y="31.500" style="font-size:11.500px">Gain latent :</text>
<text x="1051" y="31.500" style="fill:#70b2d8;font-size:11.500px">5,30 €</text>
<text x="1341" y="31.500" style="font-size:11.500px">Gain Jour :</text>
<text x="1399.500" y="31.500" style="fill:#70b2d8;font-size:11.500px">5,30 €</text>

<!-- toolbar -->
<rect y="37" width="1700" height="44" fill="url(#gb)"/>
<rect y="81" width="1700" height="1" fill="#8aa2ad"/>
<!-- cursor -->
<rect x="8" y="47" width="22" height="22" fill="#9cb1bd" stroke="#8ca2ae"/>
<path d="M17 53v11l2.500-2.500 1.800 4 1.600-.8-1.800-4h3.400z" fill="#d4e0e6" stroke="#3a4a52" stroke-width=".9"/>
<!-- magnifier -->
<circle cx="40.700" cy="56.700" r="5" fill="#f4f8fa" stroke="#1c1c1c" stroke-width="1.800"/><path d="M44.500 60.500l5 5.500" stroke="#1c1c1c" stroke-width="2.800"/>
<!-- bell -->
<path d="M60.500 64.500c2-1.500 1.800-9 5.200-10.500 3.400 1.500 3.200 9 5.200 10.500l.6 1.500H60z" fill="#f7cf1e" stroke="#b89a20" stroke-width=".7"/><path d="M58.500 53c-1.200 1.600-1.200 3.200-.2 5M73 53c1.200 1.600 1.200 3.200.2 5" fill="none" stroke="#8a8f92" stroke-width="1.100"/>
<!-- ruler -->
<path d="M80.500 63l13-13 4.500 4.500-13 13z" fill="#eaeeef" stroke="#8a9296"/><path d="M85 59l2 2M88 56l2 2M91 53l2 2" stroke="#8a9296"/>
<!-- h line -->
<path d="M102.500 59H122" stroke="#222" stroke-width="1.300"/><path d="M110.500 57l4 4M114.500 57l-4 4" stroke="#2222dd" stroke-width="1.500"/>
<!-- v line -->
<path d="M135.700 49V69" stroke="#222" stroke-width="1.500"/><path d="M133.700 57l4 4M137.700 57l-4 4" stroke="#2222dd" stroke-width="1.500"/>
<!-- channel -->
<path d="M150.500 66l16-14M157 68.500l10-8.500M153 62l7-11" stroke="#222" stroke-width="1.200"/><path d="M152 53h5M154.500 51v5M150 65h5M152.500 63v5M157 65h5M159.500 63v5" stroke="#2222dd" stroke-width="1.200"/>
<!-- pitch -->
<path d="M172.500 62l19-9" stroke="#222" stroke-width="1.200"/><path d="M174 59v6M180 55v7M186 53v6" stroke="#c83030" stroke-width="1.500"/><path d="M177 58v6M183 56v6M190 51v6" stroke="#2a9a2a" stroke-width="1.500"/>
<!-- trash -->
<path d="M199 53.500h13" stroke="#555" stroke-width="1.400"/><path d="M203 53v-1.500h5V53" fill="none" stroke="#555"/><path d="M200 55l1 11h9l1-11z" fill="#c6ccd0" stroke="#555"/><path d="M203.500 57v8M205.500 57v8M207.500 57v8" stroke="#555" stroke-width=".8"/>
<!-- tools -->
<path d="M221 53.500c2-2 4-1 5 1l9 9-2.500 2.500-9-9c-2 0-3.500-1.500-2.500-3.500z" fill="#e8ecee" stroke="#555"/><path d="M222 64l8-8 2 2-8 8z" fill="#e8ecee" stroke="#555"/><path d="M229 51l8 6-3 4-8-6z" fill="#222"/>
<!-- line -->
<path d="M242 68.500l19-19" stroke="#222" stroke-width="1.300"/><path d="M244 61.500h5M246.500 59v5M253.500 52.500h5M256 50v5" stroke="#2222dd" stroke-width="1.300"/>
<path d="M270 64l9-9.500" stroke="#222" stroke-width="1.300"/><path d="M268.500 64h5M271 61.500v5M276 54.500h5M278.500 52v5" stroke="#2222dd" stroke-width="1.300"/>
<path d="M293.500 64l10-10" stroke="#1010e0" stroke-width="2.300"/><path d="M297 60.500l3-3" stroke="#111" stroke-width="2.300"/><path d="M291.500 62h5M294 59.500v5M301 52.500h5M303.500 50v5" stroke="#1010e0" stroke-width="1.200"/>
<path d="M312.500 63.500l14-13" stroke="#222" stroke-width="1.200"/><path d="M319.500 62.500l10-8.500" stroke="#2222dd" stroke-width="1.400"/><path d="M317 52l8 9" stroke="#222" stroke-width="1"/>
<!-- T -->
<path d="M336.500 52h14.500v11l-3 3h-11.500z" fill="#fff" stroke="#111" stroke-width="1.200"/><path d="M348 66v-3h3" fill="#ddd" stroke="#666" stroke-width=".6"/>
<text class="b" x="340" y="63.500" style="font-family:'Liberation Serif',serif;font-size:13px;fill:#111;transform:none">T</text>
<!-- arrows -->
<path d="M361 56.500h6.500v-3.500l6 5.500-6 5.500v-3.500H361z" fill="#111"/>
<path d="M390.300 52.500l5 6h-3V64h-4v-5.500h-3z" fill="#4288de" stroke="#2c6ab8" stroke-width=".5"/>
<path d="M413.800 64l4.800-5.500h-2.800V52.500h-4v6h-2.800z" fill="#ee2424" stroke="#b81818" stroke-width=".5"/>
<!-- ellipse -->
<ellipse cx="436.500" cy="58.500" rx="8" ry="5" fill="#c6d0d4" stroke="#222" stroke-width="1.400"/><path d="M427 54h5M429.500 51.500v5M441 63.500h5M443.500 61v5" stroke="#2222dd" stroke-width="1.100"/>
<!-- rectangle -->
<rect x="452" y="53.500" width="16" height="10" fill="none" stroke="#222" stroke-width="1.400"/><path d="M450 53.500h5M452.500 51v5M465 63.500h5M467.500 61v5" stroke="#2222dd" stroke-width="1.100"/>
<!-- triangle -->
<path d="M482.700 54l-5.500 11h11z" fill="none" stroke="#222" stroke-width="1.400"/><path d="M480.200 53.500h5M482.700 51v5M475 65h5M477.500 62.500v5M485.500 65h5M488 62.500v5" stroke="#2222dd" stroke-width="1.100"/>
<!-- chart -->
<path d="M497.500 52.500h17.500" stroke="#e02020" stroke-width="1.500"/><path d="M497.500 64.500h17.500" stroke="#0aa02a" stroke-width="2"/><path d="M500 62l3-5 2.500 3 3-6" fill="none" stroke="#0aa02a"/><path d="M505.500 60l3-6 4 1" fill="none" stroke="#e02020"/>
<!-- fan -->
<path d="M520.500 51.500l18 4.500" stroke="#e02020" stroke-width="2.200"/><path d="M520.500 66l18-6" stroke="#0aa02a" stroke-width="2"/><path d="M522 53l4 10 2-9 3 7 1-6 2.500 4.500" fill="none" stroke="#c83030" stroke-width="1.100"/>
<!-- fib -->
<path d="M547 54h11M547 56.500h11M547 59h11M547 61.500h11M547 64h11" stroke="#222" stroke-width="1" stroke-dasharray="2 1"/><path d="M542.500 66.500l2.500 2.500 3-4 5-4 7-11" fill="none" stroke="#1ca02a" stroke-width="1.100"/>

<!-- palette -->
<g stroke="#c8d2d8" stroke-width=".4">
<rect x="588.500" y="50" width="9" height="9" rx="1.500" fill="#ffffff"/><rect x="598.200" y="50" width="9" height="9" rx="1.500" fill="#d4d4d4"/><rect x="608" y="50" width="9" height="9" rx="1.500" fill="#a6a6a6"/><rect x="617.700" y="50" width="9" height="9" rx="1.500" fill="#7e7e7e"/><rect x="627.400" y="50" width="9" height="9" rx="1.500" fill="#5e5e5e"/>
<rect x="646.800" y="50" width="9" height="9" rx="1.500" fill="#c0d0fc"/><rect x="656.500" y="50" width="9" height="9" rx="1.500" fill="#6f9ffa"/><rect x="666.200" y="50" width="9" height="9" rx="1.500" fill="#62b4ee"/><rect x="676" y="50" width="9" height="9" rx="1.500" fill="#0000f0"/><rect x="685.700" y="50" width="9" height="9" rx="1.500" fill="#3030cc"/><rect x="695.400" y="50" width="9" height="9" rx="1.500" fill="#10209a"/><rect x="705.100" y="50" width="9" height="9" rx="1.500" fill="#6a30c8"/><rect x="714.800" y="50" width="9" height="9" rx="1.500" fill="#ff78c8"/>
<rect x="588.500" y="59.500" width="9" height="9" rx="1.500" fill="#e86464"/><rect x="598.200" y="59.500" width="9" height="9" rx="1.500" fill="#ff0000"/><rect x="608" y="59.500" width="9" height="9" rx="1.500" fill="#e43030"/><rect x="617.700" y="59.500" width="9" height="9" rx="1.500" fill="#8a4a14"/><rect x="627.400" y="59.500" width="9" height="9" rx="1.500" fill="#ff9a30"/><rect x="637.100" y="59.500" width="9" height="9" rx="1.500" fill="#ff8a8a"/><rect x="646.800" y="59.500" width="9" height="9" rx="1.500" fill="#ffc830"/><rect x="656.500" y="59.500" width="9" height="9" rx="1.500" fill="#ffff10"/><rect x="666.200" y="59.500" width="9" height="9" rx="1.500" fill="#60ffc8"/><rect x="676" y="59.500" width="9" height="9" rx="1.500" fill="#88ff78"/><rect x="685.700" y="59.500" width="9" height="9" rx="1.500" fill="#18f018"/><rect x="695.400" y="59.500" width="9" height="9" rx="1.500" fill="#50d850"/><rect x="705.100" y="59.500" width="9" height="9" rx="1.500" fill="#30b030"/><rect x="714.800" y="59.500" width="9" height="9" rx="1.500" fill="#006400"/>
</g>
<rect x="636" y="48" width="12" height="12" rx="1.500" fill="#050505" stroke="#444"/>
<rect x="637" y="49" width="10" height="3" fill="#fff" opacity=".3"/>
<path d="M588.500 52h135M588.500 61.500h135" stroke="#fff" stroke-width="2" opacity=".22"/>

<!-- selects -->
<rect x="847.500" y="50" width="75.500" height="18" rx="2.500" fill="#fff" stroke="#a6b8c2"/>
<text x="851" y="63" style="font-size:11.500px">50 unités</text>
<rect x="906.500" y="52" width="14.500" height="14" rx="1.500" fill="#a8c2d2"/><path d="M910.500 57h7l-3.500 4z" fill="#111"/>
<rect x="1084.500" y="50" width="78" height="18" rx="2.500" fill="#fff" stroke="#a6b8c2"/>
<text x="1088" y="63" style="font-size:11.500px">Journalier</text>
<rect x="1146" y="52" width="14.500" height="14" rx="1.500" fill="#a8c2d2"/><path d="M1150 57h7l-3.500 4z" fill="#111"/>

<!-- indicator button -->
<rect x="1323.500" y="46.500" width="44" height="24.500" rx="3" fill="#e8eef2" stroke="#8ea4b0"/>
<rect x="1325" y="48" width="29" height="21.500" fill="#fff"/>
<path d="M1354 46.500v24.500" stroke="#a8bac4"/>
<path d="M1357.500 58h7l-3.500 4z" fill="#111"/>
<path d="M1326 62c3 0 4-8 7-8s4 9 8 9 5-10 11-12" fill="none" stroke="#e03030" stroke-width="1.300"/>
<path d="M1326 64c4-4 5-8 8-8s4 6 6 6 4-3 7-6" fill="none" stroke="#2aa02a" stroke-width="1.100"/>
<path d="M1327 66h25" stroke="#108a10" stroke-width="3" stroke-dasharray="3 2"/>
<path d="M1329 49h4v3h3v3h-3v3h-4v-3h-3v-3h3z" fill="#f4f4f4" stroke="#777" stroke-width=".7"/>
<path d="M1336 60l2.500-3 2.500 3h-1.500v4h-2v-4z" fill="#1a9a1a"/><path d="M1346 50v4h-1.500l2.500 3 2.500-3h-1.500v-4z" fill="#d82020"/>

<!-- right panel -->
<path d="M1497 38h203v43h-203c2-1-3-3-3-5v-33c0-2 4-4 3-5z" fill="#fff"/>
<path d="M1502 38c-4 2-7 4-7 7v30c0 3 3 4 7 6" fill="#b6c8d0" stroke="#a0b4be"/>
<path d="M1497.500 57l4 3.500-4 3.500z" fill="#111"/>
<rect x="1505.500" y="50.500" width="16.500" height="16" rx="3" fill="#fff" stroke="#7e95a2"/>
<path d="M1510 64l6-7c2 0 3-1 3-3l-1.800 1.500-1.700-1.700 1.300-1.500c-2 0-3.500 1-3.500 3.500l-5 6z" fill="#fff" stroke="#222" stroke-width=".9"/>
<text class="m" x="1544.500" y="48.500">Qté</text>
<rect x="1525" y="51" width="40" height="19" rx="2.500" fill="#fff" stroke="#b0c0c8" stroke-width="1.200"/>
<text class="e" x="1561.500" y="64.500">1</text>
<path d="M1569.500 44V72M1600.500 44V72M1631.500 44V72" stroke="#a9bac4"/>
<text class="m" x="1585.500" y="48.500">Limite</text>
<text class="m" x="1617" y="48.500">Stop</text>
<rect x="1573.500" y="52.500" width="24.500" height="24" rx="3" fill="#eef2f5" stroke="#8ea2ae" stroke-width="1.200"/>
<rect x="1604.500" y="52.500" width="24" height="24" rx="3" fill="#eef2f5" stroke="#8ea2ae" stroke-width="1.200"/>
<path d="M1584 57h6l3 3v12h-9z" fill="#fff" stroke="#777" stroke-width=".7"/>
<path d="M1615 57h6l3 3v12h-9z" fill="#fff" stroke="#777" stroke-width=".7"/>
<path d="M1585 65h9v9h-9zM1585 68h9M1585 71h9M1616 65h9v9h-9zM1616 68h9M1616 71h9" fill="none" stroke="#777"/>
<path d="M1577 55h3v3h2l-3.500 4-3.500-4h2z" fill="#e01818"/><path d="M1578.500 63l3.500 4h-2v3h-3v-3h-2z" fill="#1a5ed0"/>
<path d="M1611.500 55l3.500 4h-2v3h-3v-3h-2z" fill="#1a5ed0"/><path d="M1610 63h3v3h2l-3.500 4-3.500-4h2z" fill="#e01818"/>
<rect x="1637.500" y="45.500" width="10" height="9.500" fill="#eef0f2" stroke="#b8c2c8"/>
<path d="M1639.500 50l2.500 3 4-6" fill="none" stroke="#9aa4aa" stroke-width="1.200"/>
<text x="1650.500" y="53.500" style="fill:#c4ccd2;font-size:12px">Sg</text>
<rect x="1666.500" y="39.500" width="21" height="18.500" rx="4" fill="#fff" stroke="#a6b6c0" stroke-width="1.200"/>
<text class="m" x="1677" y="53">500</text>
<text x="1689" y="53">pts</text>
<rect x="1637.500" y="65.500" width="10" height="10" fill="#fff" stroke="#a6b6c0"/>
<text x="1651" y="73.500">L</text>
<rect x="1666.500" y="60" width="10" height="18.500" rx="4" fill="#fff" stroke="#a6b6c0" stroke-width="1.200"/>
<text class="m" x="1671.500" y="73.500" style="fill:#98a4ac">4</text>
<text x="1678" y="73.500">pts</text>
</svg>
</body></html>
